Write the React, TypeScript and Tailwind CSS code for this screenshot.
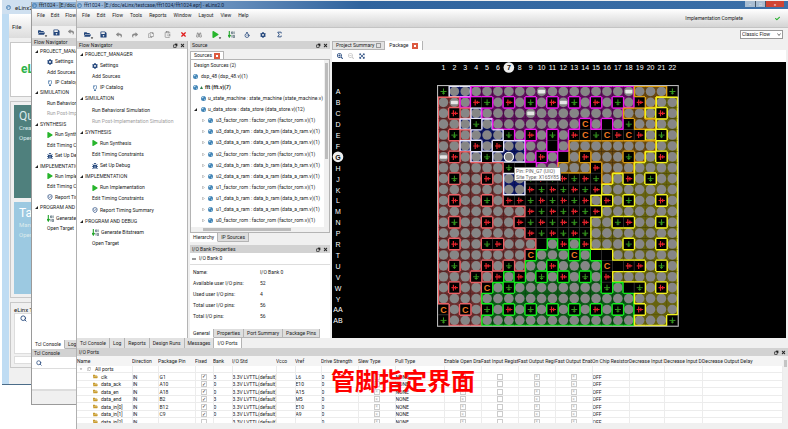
import type { ReactNode } from "react";
import {
  FaBug,
  FaCaretDown,
  FaCheck,
  FaCog,
  FaExpandArrowsAlt,
  FaFolderOpen,
  FaPlay,
  FaRegCopy,
  FaRegLightbulb,
  FaReply,
  FaSave,
  FaSearchMinus,
  FaSearchPlus,
  FaShare,
  FaTimes,
} from "react-icons/fa";
import { Binoculars, ClipboardPaste, Search, ShieldCheck, Sigma, Timer } from "lucide-react";

/* ---------- small drawings ---------- */

function Orb() {
  return (
    <svg viewBox="0 0 10 10" className="size-[5px] shrink-0">
      <circle cx="5" cy="5" r="5" fill="#3f82b4" />
      <path d="M1 4 Q3 0 6 1 Q5 4 2 5Z" fill="#c9e2f2" />
      <path d="M6 6 Q8 4 9 6 Q8 9 6 9Z" fill="#8dbbd9" />
    </svg>
  );
}

function Bits() {
  return (
    <svg viewBox="0 0 16 16" className="size-[7px] shrink-0">
      <path d="M3 0V12M0 9L3 14L6 9" stroke="#23a52b" strokeWidth="2.5" fill="none" />
      <path d="M8 2h3v4h-3zM14 1v6M9 9v6M12 10h3v5h-3z" stroke="#3b5563" strokeWidth="1.5" fill="none" />
    </svg>
  );
}

function Logo() {
  return (
    <svg viewBox="0 0 10 10" className="size-[5px] shrink-0">
      <circle cx="5" cy="5" r="4" fill="none" stroke="#3c78b0" strokeWidth="1.6" />
      <path d="M2 6 Q5 2 8 4" stroke="#3c78b0" strokeWidth="1.2" fill="none" />
    </svg>
  );
}

function FloatIcon() {
  return (
    <svg viewBox="0 0 8 8" className="size-[5px]">
      <path d="M3 1H7V5H3Z" fill="#222" />
      <path d="M1 3H5V7H1Z" fill="#eee" stroke="#222" strokeWidth="1.2" />
    </svg>
  );
}

function CloseBox() {
  return (
    <span className="flex size-[6px] items-center justify-center bg-[#dc5a40]">
      <span className="size-[2px] bg-white" />
    </span>
  );
}

/* ---------- flow navigator ---------- */

type Step = { text: string; icon?: ReactNode; head?: boolean; off?: boolean };

const play = <FaPlay className="size-[6px] text-[#27b52c]" />;

const steps: Step[] = [
  { text: "PROJECT_MANAGER", head: true },
  { text: "Settings", icon: <FaCog className="size-[6px] text-[#24477c]" /> },
  { text: "Add Sources" },
  { text: "IP Catalog", icon: <FaRegLightbulb className="size-[6px] text-[#2f639b]" /> },
  { text: "SIMULATION", head: true },
  { text: "Run Behavioral Simulation" },
  { text: "Run Post-Implementation Simulation", off: true },
  { text: "SYNTHESIS", head: true },
  { text: "Run Synthesis", icon: play },
  { text: "Edit Timing Constraints" },
  { text: "Set Up Debug", icon: <FaBug className="size-[6px] text-[#24477c]" /> },
  { text: "IMPLEMENTATION", head: true },
  { text: "Run Implementation", icon: play },
  { text: "Edit Timing Constraints" },
  { text: "Report Timing Summary", icon: <ShieldCheck strokeWidth={3} className="size-[6px] text-[#24477c]" /> },
  { text: "PROGRAM AND DEBUG", head: true },
  { text: "Generate Bitstream", icon: <Bits /> },
  { text: "Open Target" },
];

function FlowSteps({ className }: { className: string }) {
  return (
    <ul className={`flex flex-col ${className}`}>
      {steps.map((s, i) => (
        <li
          key={i}
          className={`flex flex-1 items-center gap-[2px] whitespace-nowrap ${s.head ? "pl-[3px]" : "pl-[15px]"} ${s.off ? "text-[#a0a0a0]" : ""}`}
        >
          {s.head && (
            <svg viewBox="0 0 6 6" className="size-[3px]">
              <path d="M6 0V6H0Z" fill="#222" />
            </svg>
          )}
          {s.icon}
          {s.text}
        </li>
      ))}
    </ul>
  );
}

function PanelTitle({ text, plain }: { text: string; plain?: boolean }) {
  return (
    <div className="flex h-[8px] shrink-0 items-center justify-between bg-[#d2d2d2] px-[2px]">
      <span>{text}</span>
      {!plain && (
        <span className="flex items-center gap-[2px]">
          <button aria-label="Float">
            <FloatIcon />
          </button>
          <button aria-label="Close">
            <FaTimes className="size-[5px] text-[#222]" />
          </button>
        </span>
      )}
    </div>
  );
}

function Tabs({ items, active }: { items: string[]; active: string }) {
  return (
    <div className="flex h-[9px] shrink-0 whitespace-nowrap">
      {items.map((t) => (
        <button
          key={t}
          className={`border-r border-b border-[#b4b4b4] px-[3px] ${t === active ? "border-b-white bg-white" : "bg-[#dedede]"}`}
        >
          {t}
        </button>
      ))}
    </div>
  );
}

/* ---------- package view ---------- */

// Capital letter: pin of a bank, small letter: pin with a port placed on it,
// + ground, - power, C configuration, . not bonded
const pins = [
  "+WWPPPPPPpPPPPPPPpOOO+",
  "SsP-+P-P+P-p+P-P+P-OYY",
  "S-SWPPPPpPPPPPPPPOOY-Y",
  "SSW+WPPPPPPPPCP.P+OOYY",
  "S+SWWW+P-P+P-C+C-C-Y+Y",
  "SSW-W-WWPP.POOOOOOOOYY",
  "s-SW+WWWP-P.O-OOO+OY-Y",
  "SSSSSS+..PPOOO-OOOYYYY",
  "S+SS-SWW+-+-+-+OY-Y+YY",
  "SSSSSSWW-+-+-+-YYYYYYY",
  "S-SS+S--+-+-+-Y-Y+YY-Y",
  "SSSSSSSS-+-+-+-YYYYYYY",
  "S+SS-SS-+-+-+-YY+-YY+Y",
  "SSSSSSSS-+-+-+YYYYYYYY",
  "S-SS+-SSS.G-G-YYY+YY-Y",
  "SSSSSSSSCGGGCG..YYYYYY",
  "S+SS-S+SGG-GGGGC.--Y+Y",
  "SSS+S-G-G+G-G+G-YYYYYY",
  "S-SSCG+GGGGGGGG+G.+Y-Y",
  "SSSSGGGGGGGGGGGGGGYYYY",
  "CSCS+G-G+G-G+G-G+G-YYY",
  "+SSSGGGGGGGGGGGGGGYYY+",
];
const rowNames = "A B C D E F G H J K L M N P R T U V W Y AA AB".split(" ");
const banks: Record<string, [string, string]> = {
  S: ["#6b2e2e", "#ea6064"],
  W: ["#0d1768", "#e4e4fa"],
  P: ["#62105f", "#ee18ee"],
  O: ["#6b4a10", "#e0a010"],
  Y: ["#67630f", "#f2f21c"],
  G: ["#0b5c16", "#12ee1c"],
};
const cell = 10.9;
const left = 106;
const top = 24;

const bankAt = (r: number, c: number) => (pins[r]?.[c] ?? " ").toUpperCase();

function Pin({ r, c }: { r: number; c: number }) {
  const x = left + c * cell;
  const y = top + r * cell;
  const kind = pins[r][c];
  const bank = banks[kind.toUpperCase()];

  if (!bank) {
    return (
      <g transform={`translate(${x} ${y})`}>
        <rect width={cell} height={cell} fill="#000" stroke="#3c3c3c" strokeWidth="0.6" />
        {kind === "+" && <path d="M5.5 2.5V8.5M2.5 5.5H8.5M4 7.2H7" stroke="#35961e" strokeWidth="1" />}
        {kind === "-" && <path d="M2.5 5.5H9M4.5 2.5V8.5M6.6 3.8V7.2" stroke="#e0222a" strokeWidth="1.2" />}
        {kind === "C" && (
          <text x="5.5" y="8.6" textAnchor="middle" fontSize="9" fontWeight="bold" fill="#ee7a22">
            C
          </text>
        )}
      </g>
    );
  }

  return (
    <g transform={`translate(${x} ${y})`}>
      <rect width={cell} height={cell} fill={bank[0]} />
      <circle cx={cell / 2} cy={cell / 2} r="4.8" fill="#868686" />
      {kind !== kind.toUpperCase() && <rect x="2" y="3.8" width="7" height="3.6" rx="0.8" fill="#e6e6e6" />}
    </g>
  );
}

// Outline of a bank where its pins meet anything else
function Edge({ r, c }: { r: number; c: number }) {
  const me = bankAt(r, c);
  if (!banks[me]) return null;
  const n = 0.3;
  const f = cell - 0.3;
  let d = "";
  if (bankAt(r - 1, c) !== me) d += `M0 ${n}H${cell}`;
  if (bankAt(r + 1, c) !== me) d += `M0 ${f}H${cell}`;
  if (bankAt(r, c - 1) !== me) d += `M${n} 0V${cell}`;
  if (bankAt(r, c + 1) !== me) d += `M${f} 0V${cell}`;
  return (
    <path
      d={d}
      transform={`translate(${left + c * cell} ${top + r * cell})`}
      stroke={banks[me][1]}
      strokeWidth="1.4"
      fill="none"
    />
  );
}

function PackageMap() {
  return (
    <svg viewBox="0 0 400 274" className="h-[274px] w-[400px] shrink-0" fontFamily="Liberation Sans, sans-serif">
      <circle cx={left + 6.5 * cell} cy="5.5" r="5.3" fill="#eee" />
      <circle cx="6" cy={top + 6.5 * cell} r="5.3" fill="#eee" />
      {pins[0].split("").map((_, c) => (
        <text
          key={c}
          x={left + (c + 0.5) * cell}
          y="8"
          textAnchor="middle"
          fontSize="7"
          fontWeight={c === 6 ? "bold" : "normal"}
          fill={c === 6 ? "#111" : "#fff"}
        >
          {c + 1}
        </text>
      ))}
      {rowNames.map((name, r) => (
        <text
          key={name}
          x="6"
          y={top + (r + 0.5) * cell + 3}
          textAnchor="middle"
          fontSize="7"
          fontWeight={r === 6 ? "bold" : "normal"}
          fill={r === 6 ? "#111" : "#fff"}
        >
          {name}
        </text>
      ))}
      {pins.map((line, r) => line.split("").map((_, c) => <Pin key={`${r}-${c}`} r={r} c={c} />))}
      {pins.map((line, r) => line.split("").map((_, c) => <Edge key={`${r}-${c}`} r={r} c={c} />))}
      <rect x={left - 0.5} y={top - 0.5} width={22 * cell + 1} height={22 * cell + 1} fill="none" stroke="#b8b8b8" />
      <circle cx={left + 6.5 * cell} cy={top + 6.5 * cell} r="4.6" fill="#868686" stroke="#fff" strokeWidth="1.2" />
    </svg>
  );
}

/* ---------- sources ---------- */

const roms = ["u3_factor", "u3_data_b", "u3_data_a", "u2_factor", "u2_data_b", "u2_data_a", "u1_factor", "u1_data_b", "u1_data_a", "u0_factor"];

function Sources() {
  return (
    <section className="flex flex-col">
      <PanelTitle text="Source" />
      <div className="mt-[2px] flex h-[8px]">
        <button className="flex items-center gap-[2px] border-x border-t border-[#b4b4b4] bg-white px-[3px]">
          Sources <CloseBox />
        </button>
      </div>
      <div className="flex h-[174px] flex-col border border-[#b4b4b4] bg-white">
        <div className="flex min-h-0 flex-1">
          <ul className="flex h-[166px] min-w-0 flex-1 flex-col overflow-hidden whitespace-nowrap">
            <li className="flex flex-1 items-center pl-[3px]">Design Sources (2)</li>
            <li className="flex flex-1 items-center gap-[3px] pl-[2px]">
              <Orb /> dsp_48 (dsp_48.v)(1)
            </li>
            <li className="flex flex-1 items-center gap-[2px] pl-[2px] font-bold">
              <Orb />
              <svg viewBox="0 0 6 6" className="size-[3px]">
                <path d="M3 0L6 6H0Z" fill="#2d7d4a" />
              </svg>
              fft (fft.v)(7)
            </li>
            <li className="flex flex-1 items-center gap-[2px] pl-[10px]">
              <Orb /> u_state_machine : state_machine (state_machine.v)
            </li>
            <li className="flex flex-1 items-center gap-[2px] pl-[3px]">
              <svg viewBox="0 0 6 6" className="mr-[2px] size-[3px]">
                <path d="M6 0V6H0Z" fill="#222" />
              </svg>
              <Orb /> u_data_store : data_store (data_store.v)(12)
            </li>
            {roms.map((name) => {
              const unit = name.slice(3) + (name.includes("factor") ? "_rom" : "_ram");
              return (
                <li key={name} className="flex flex-1 items-center gap-[3px] pl-[11px]">
                  <svg viewBox="0 0 6 6" className="size-[3px]">
                    <path d="M1 0L5 3L1 6Z" fill="none" stroke="#999" />
                  </svg>
                  <Orb />
                  {`${name.slice(0, 3)}${unit} : ${unit} (${unit}.v)(1)`}
                </li>
              );
            })}
          </ul>
          <div className="w-[5px] bg-[#f0f0f0] px-px pt-[3px]">
            <div className="h-24 bg-[#bcbcbc]" />
          </div>
        </div>
        <div className="h-[5px] bg-[#f0f0f0] px-3 py-px">
          <div className="h-[3px] w-[88px] bg-[#bcbcbc]" />
        </div>
      </div>
      <Tabs items={["Hierarchy", "IP Sources"]} active="Hierarchy" />
    </section>
  );
}

const bankProps = [
  ["Name:", "I/O Bank 0"],
  ["Available user I/O pins:", "52"],
  ["Used user I/O pins:", "4"],
  ["Total user I/O pins:", "56"],
  ["Total I/O pins:", "56"],
];

function BankProperties() {
  return (
    <section className="mt-[3px] flex flex-1 flex-col bg-white">
      <PanelTitle text="I/O Bank Properties" />
      <div className="flex h-3 items-center gap-[3px] border-b border-[#ddd] px-[2px]">
        <span className="h-[2px] w-1 bg-[#999]" /> I/O Bank 0
      </div>
      <dl className="flex flex-1 flex-col pt-[2px]">
        {bankProps.map(([k, v]) => (
          <div key={k} className="flex h-[11px] items-center px-[3px]">
            <dt className="w-[67px]">{k}</dt>
            <dd>{v}</dd>
          </div>
        ))}
      </dl>
      <Tabs items={["General", "Properties", "Port Summary", "Package Pins"]} active="General" />
    </section>
  );
}

/* ---------- I/O ports ---------- */

const columns: [string, string][] = [
  ["Name", "w-[55px]"],
  ["Direction", "w-[26px]"],
  ["Package Pin", "w-[37px]"],
  ["Fixed", "w-[18px]"],
  ["Bank", "w-[19px]"],
  ["I/O Std", "w-[44px]"],
  ["Vcco", "w-[19px]"],
  ["Vref", "w-[26px]"],
  ["Drive Strength", "w-[37px]"],
  ["Slew Type", "w-[37px]"],
  ["Pull Type", "w-[49px]"],
  ["Enable Open Drain", "w-[37px]"],
  ["Fast Input Register", "w-[37px]"],
  ["Fast Output Register", "w-[37px]"],
  ["Fast Output Enable", "w-[37px]"],
  ["On Chip Resistor", "w-[37px]"],
  ["Decrease Input Delay", "w-[35px]"],
  ["Decrease Input Delay", "w-[38px]"],
  ["Decrease Output Delay", "w-auto"],
];

const ports = [
  ["clk", "G1", "3", "L6"],
  ["data_ack", "A10", "0", "E10"],
  ["data_en", "A18", "0", "A15"],
  ["data_end", "B2", "3", "M5"],
  ["data_in[0]", "B12", "0", "E10"],
  ["data_in[1]", "C9", "0", "A9"],
  ["data_in[2]", "", "", ""],
];

function Tick({ label, kind }: { label: string; kind: "on" | "mixed" | "off" }) {
  return (
    <input
      type="checkbox"
      aria-label={label}
      defaultChecked={kind === "on"}
      disabled={kind === "mixed"}
      className={`mx-auto flex size-[6px] appearance-none items-center justify-center border text-[5px] leading-none ${
        kind === "on"
          ? "border-[#ccc] before:content-['✓']"
          : kind === "mixed"
            ? "border-[#ccc] text-[#bbb] before:content-['×']"
            : "border-[#ccc]"
      }`}
    />
  );
}

function Ports() {
  return (
    <section className="relative shrink-0">
      <div className="flex h-[10px] bg-[#f0f0f0]">
        {["Tcl Console", "Log", "Reports", "Design Runs", "Messages", "I/O Ports"].map((t) => (
          <button
            key={t}
            className={`border-r border-[#b4b4b4] px-[3px] ${t === "I/O Ports" ? "bg-white" : "bg-[#e2e2e2]"}`}
          >
            {t}
          </button>
        ))}
      </div>
      <PanelTitle text="I/O Ports" />
      <div className="flex h-[67px] overflow-hidden bg-white">
        <div className="min-w-0 flex-1">
          <table className="h-[70px] w-full table-fixed border-collapse text-left whitespace-nowrap">
            <thead>
              <tr className="h-[10px] bg-[#f4f4f4]">
                {columns.map(([name, w], i) => (
                  <th key={i} className={`${w} overflow-hidden p-0 font-normal`}>
                    {name}
                  </th>
                ))}
              </tr>
            </thead>
            <tbody className="leading-[6px] [&_td]:overflow-hidden [&_td]:border [&_td]:border-t-0 [&_td]:border-l-0 [&_td]:border-[#ececec] [&_td]:p-0">
              <tr>
                <td>
                  <span className="flex items-center gap-1 pl-[2px]">
                    <FaCaretDown className="size-[4px] text-[#888]" />
                    <FaRegCopy className="size-[4px] text-[#999]" />
                    All ports
                  </span>
                </td>
                {columns.slice(1).map((_, i) => (
                  <td key={i} />
                ))}
              </tr>
              {ports.map(([name, pin, bank, vref]) => (
                <tr key={name}>
                  <td>
                    <span className="flex items-center gap-[3px] pl-4">
                      <FaFolderOpen className="size-[5px] text-[#c89b2c]" />
                      {name}
                    </span>
                  </td>
                  <td>IN</td>
                  <td className="indent-px">{pin}</td>
                  <td>
                    <Tick label={`${name} fixed`} kind={pin ? "on" : "off"} />
                  </td>
                  <td>{bank}</td>
                  <td>3.3V LVTTL(default)</td>
                  <td />
                  <td>{vref}</td>
                  <td>0</td>
                  <td>
                    <Tick label={`${name} slew`} kind="mixed" />
                  </td>
                  <td>NONE</td>
                  <td>
                    <Tick label={`${name} open drain`} kind="mixed" />
                  </td>
                  <td>
                    <Tick label={`${name} fast input`} kind="off" />
                  </td>
                  <td>
                    <Tick label={`${name} fast output`} kind="mixed" />
                  </td>
                  <td>
                    <Tick label={`${name} output enable`} kind="mixed" />
                  </td>
                  <td>OFF</td>
                  <td />
                  <td />
                  <td />
                </tr>
              ))}
            </tbody>
          </table>
        </div>
        <div className="w-[5px] bg-[#f0f0f0] px-px pt-1">
          <div className="h-[7px] bg-[#c4c4c4]" />
        </div>
      </div>
      <div className="h-[6px] bg-[#f0f0f0]" />
      <p className="absolute top-[28px] left-[254px] font-['Noto_Sans_CJK_SC',sans-serif] text-[24px] leading-[28px] font-bold whitespace-nowrap text-[#ff0000]">
        管脚指定界面
      </p>
    </section>
  );
}

/* ---------- windows ---------- */

const menus = ["File", "Edit", "Flow", "Tools", "Reports", "Window", "Layout", "View", "Help"];

const tools: [string, ReactNode][] = [
  ["Open", <FaFolderOpen className="size-[7px] text-[#24477c]" />],
  ["Save", <FaSave className="size-[7px] text-[#24477c]" />],
  ["Undo", <FaReply className="size-[6px] text-[#8a8a8a]" />],
  ["Redo", <FaShare className="size-[6px] text-[#8a8a8a]" />],
  ["Copy", <FaRegCopy className="size-[6px] text-[#8a8a8a]" />],
  ["Paste", <ClipboardPaste className="size-[7px] text-[#777]" />],
  ["Delete", <FaTimes className="size-[7px] text-[#e01b1b]" />],
  ["Find", <Binoculars className="size-[6px] text-[#777]" />],
  ["Run", <FaPlay className="size-[7px] text-[#27b52c]" />],
  ["Bitstream", <Bits />],
  ["Timing", <Timer strokeWidth={3} className="size-[6px] text-[#24477c]" />],
  ["Settings", <FaCog className="size-[6px] text-[#24477c]" />],
  ["Sum", <Sigma strokeWidth={3} className="size-[7px] text-[#24477c]" />],
];

function Toolbar({ gap }: { gap: string }) {
  return (
    <div className={`flex items-center ${gap}`}>
      {tools.map(([name, icon]) => (
        <button key={name} aria-label={name} className="relative flex w-2 justify-center">
          {icon}
          {(name === "Open" || name === "Run") && (
            <FaCaretDown className="absolute -right-[3px] -bottom-[2px] size-[4px] text-black" />
          )}
        </button>
      ))}
    </div>
  );
}

function StartWindow() {
  return (
    <div className="absolute top-0 bottom-[44px] left-[2px] flex w-[300px] flex-col overflow-hidden border-b border-[#4b6c88] bg-[#bfdcf3] pl-[7px]">
      <div className="-ml-[7px] flex h-[14px] items-center gap-1 bg-[#cfe0f0] pl-1 text-[6px]">
        <Logo /> eLinx2.0
      </div>
      <div className="flex h-6 items-center gap-3 bg-linear-to-b from-white to-[#dcdcdc] pl-[3px] text-[6px]">
        <span>File</span>
        <span>Help</span>
      </div>
      <div className="flex flex-1 flex-col gap-1 bg-[#f0f0f0] pt-1 pb-4 pl-[1px]">
        <div className="flex h-[55px] items-center border border-[#c8c8c8] bg-white pl-[10px] text-[12px] font-bold text-[#2cb34a]">
          eLinx
        </div>
        <div className="flex h-[197px] flex-col gap-1 border border-[#c8c8c8] p-[3px] text-[6px] leading-[10px] text-[#dcebec]">
          <div className="flex-1 bg-[#4f807d] pt-1 pl-[5px]">
            <h2 className="text-[12px] leading-[14px]">Quick Start</h2>
            <p>Create Project</p>
            <p>Open Project</p>
          </div>
          <div className="flex-1 bg-[#9cc9e1] pt-1 pl-[5px]">
            <h2 className="text-[12px] leading-[14px] text-white">Tasks</h2>
            <p>Manage IP</p>
            <p>Open Hardware</p>
          </div>
        </div>
        <div className="flex flex-1 flex-col border border-[#c8c8c8] p-[3px] text-[6px]">
          <span>eLinx Tcl Shell</span>
          <div className="mb-[2px] flex-1 border border-[#ddd] bg-white pt-px pl-[5px]">
            <Search strokeWidth={3} className="size-[7px] text-[#24477c]" />
          </div>
          <div className="h-2 border border-[#ddd] bg-white" />
        </div>
      </div>
    </div>
  );
}

function MiddleWindow() {
  return (
    <div className="absolute top-[2px] bottom-[24px] left-[31px] flex w-[300px] flex-col overflow-hidden border-b border-l border-[#9a9a9a] bg-[#f0f0f0]">
      <div className="flex h-[7px] items-center gap-[2px] bg-[#8fb2d6] whitespace-nowrap">
        <Logo /> fft1024 - [E:/doc/eLinx/testcase/fft1024]
      </div>
      <div className="flex h-[17px] items-center gap-[6px] bg-linear-to-b from-white to-[#d8d8d8] pb-1 pl-[5px]">
        {menus.map((m) => (
          <span key={m}>{m}</span>
        ))}
      </div>
      <div className="flex h-[12px] items-center pl-[5px]">
        <Toolbar gap="gap-[7px]" />
      </div>
      <PanelTitle text="Flow Navigator" plain />
      <div className="flex-1 bg-white">
        <FlowSteps className="h-[188px]" />
      </div>
      <Tabs items={["Tcl Console", "Log"]} active="Tcl Console" />
      <PanelTitle text="Tcl Console" plain />
      <div className="flex h-[33px] flex-col bg-white pt-[3px]">
        <Search strokeWidth={3} className="ml-1 size-[6px] text-[#24477c]" />
        <div className="mt-[2px] flex-1 border-y border-[#ddd]" />
      </div>
      <div className="h-[14px] border-t border-[#ddd]" />
    </div>
  );
}

function MainWindow() {
  return (
    <div className="absolute inset-y-0 right-0 left-[76px] flex flex-col border-l border-[#b0b0b0] bg-[#f0f0f0] pt-px">
      <header className="flex h-[8px] shrink-0 items-center gap-[2px] bg-linear-to-r from-[#a5c0de] via-[#2f639d] via-40% to-[#3c70a8]">
        <Logo />
        <h1 className="flex-1 text-[#10233f]">fft1024 - [E:/doc/eLinx/testcase/fft1024/fft1024.epr] - eLinx2.0</h1>
        <div className="mr-1 flex h-[6px] self-start text-[4px] leading-[5px] text-white">
          <button aria-label="Minimize" className="w-[11px] border-r border-[#456] bg-[#a8bdd2]">
            –
          </button>
          <button aria-label="Restore" className="w-[10px] border-r border-[#456] bg-[#a8bdd2]">
            □
          </button>
          <button aria-label="Close window" className="w-[18px] bg-[#cf4434]">
            ×
          </button>
        </div>
      </header>
      <div className="flex h-[19px] shrink-0 items-center border-b border-[#c4c4c4] bg-linear-to-b from-white to-[#d4d4d4] pl-[5px]">
        <nav className="flex flex-1 gap-[7px] pb-[5px]">
          {menus.map((m) => (
            <button key={m}>{m}</button>
          ))}
        </nav>
        <span>Implementation Complete</span>
        <FaCheck className="mr-2 ml-[32px] size-[5px] text-[#21b02a]" />
      </div>
      <div className="flex h-[13px] shrink-0 items-center justify-between pr-[5px] pl-[6px]">
        <Toolbar gap="gap-[8px]" />
        <div className="relative flex items-center">
          <select
            aria-label="Flow"
            className="h-[9px] w-[43px] appearance-none border border-[#999] bg-white pl-px text-[5px] leading-[7px]"
          >
            <option>Classic Flow</option>
          </select>
          <svg viewBox="0 0 8 6" className="pointer-events-none absolute right-[2px] h-[3px] w-1">
            <path d="M1 1L4 5L7 1" fill="none" stroke="#333" strokeWidth="1.4" />
          </svg>
        </div>
      </div>

      <main className="flex min-h-0 flex-1">
        <section className="flex w-[111px] shrink-0 flex-col border-r border-[#b4b4b4] bg-white">
          <PanelTitle text="Flow Navigator" />
          <FlowSteps className="h-[200px]" />
        </section>

        <div className="mx-[2px] flex w-[140px] shrink-0 flex-col">
          <Sources />
          <BankProperties />
        </div>

        <section className="flex min-w-0 flex-1 flex-col pr-[2px]">
          <div className="flex h-[9px] shrink-0">
            <button className="flex items-center gap-[2px] border border-[#b4b4b4] bg-[#e2e2e2] px-[3px]">
              Project Summary <span className="size-[5px] border border-[#999]" />
            </button>
            <button className="flex items-center gap-[3px] border-r border-[#b4b4b4] bg-white px-1">
              Package <CloseBox />
            </button>
          </div>
          <div className="flex h-3 shrink-0 items-center gap-[5px] bg-white pl-[5px]">
            <FaSearchPlus className="size-[6px] text-[#24477c]" />
            <FaSearchMinus className="size-[6px] text-[#c8c8c8]" />
            <FaExpandArrowsAlt className="size-[6px] text-[#24477c]" />
          </div>
          <div className="relative min-h-0 flex-1 overflow-hidden bg-black">
            <PackageMap />
            <div className="absolute top-[105px] left-[182px] border border-[#888] bg-white px-px leading-[6px] whitespace-nowrap text-[#666]">
              Pin: PIN_G7 (UIO)
              <br />
              Site Type: X165Y85
            </div>
          </div>
        </section>
      </main>

      <Ports />
    </div>
  );
}

export default function App() {
  return (
    <div className="relative h-screen min-h-[420px] overflow-hidden bg-white font-[Roboto,'Liberation_Sans',sans-serif] text-[5px] leading-[7px] text-[#222]">
      <StartWindow />
      <MiddleWindow />
      <MainWindow />
    </div>
  );
}
